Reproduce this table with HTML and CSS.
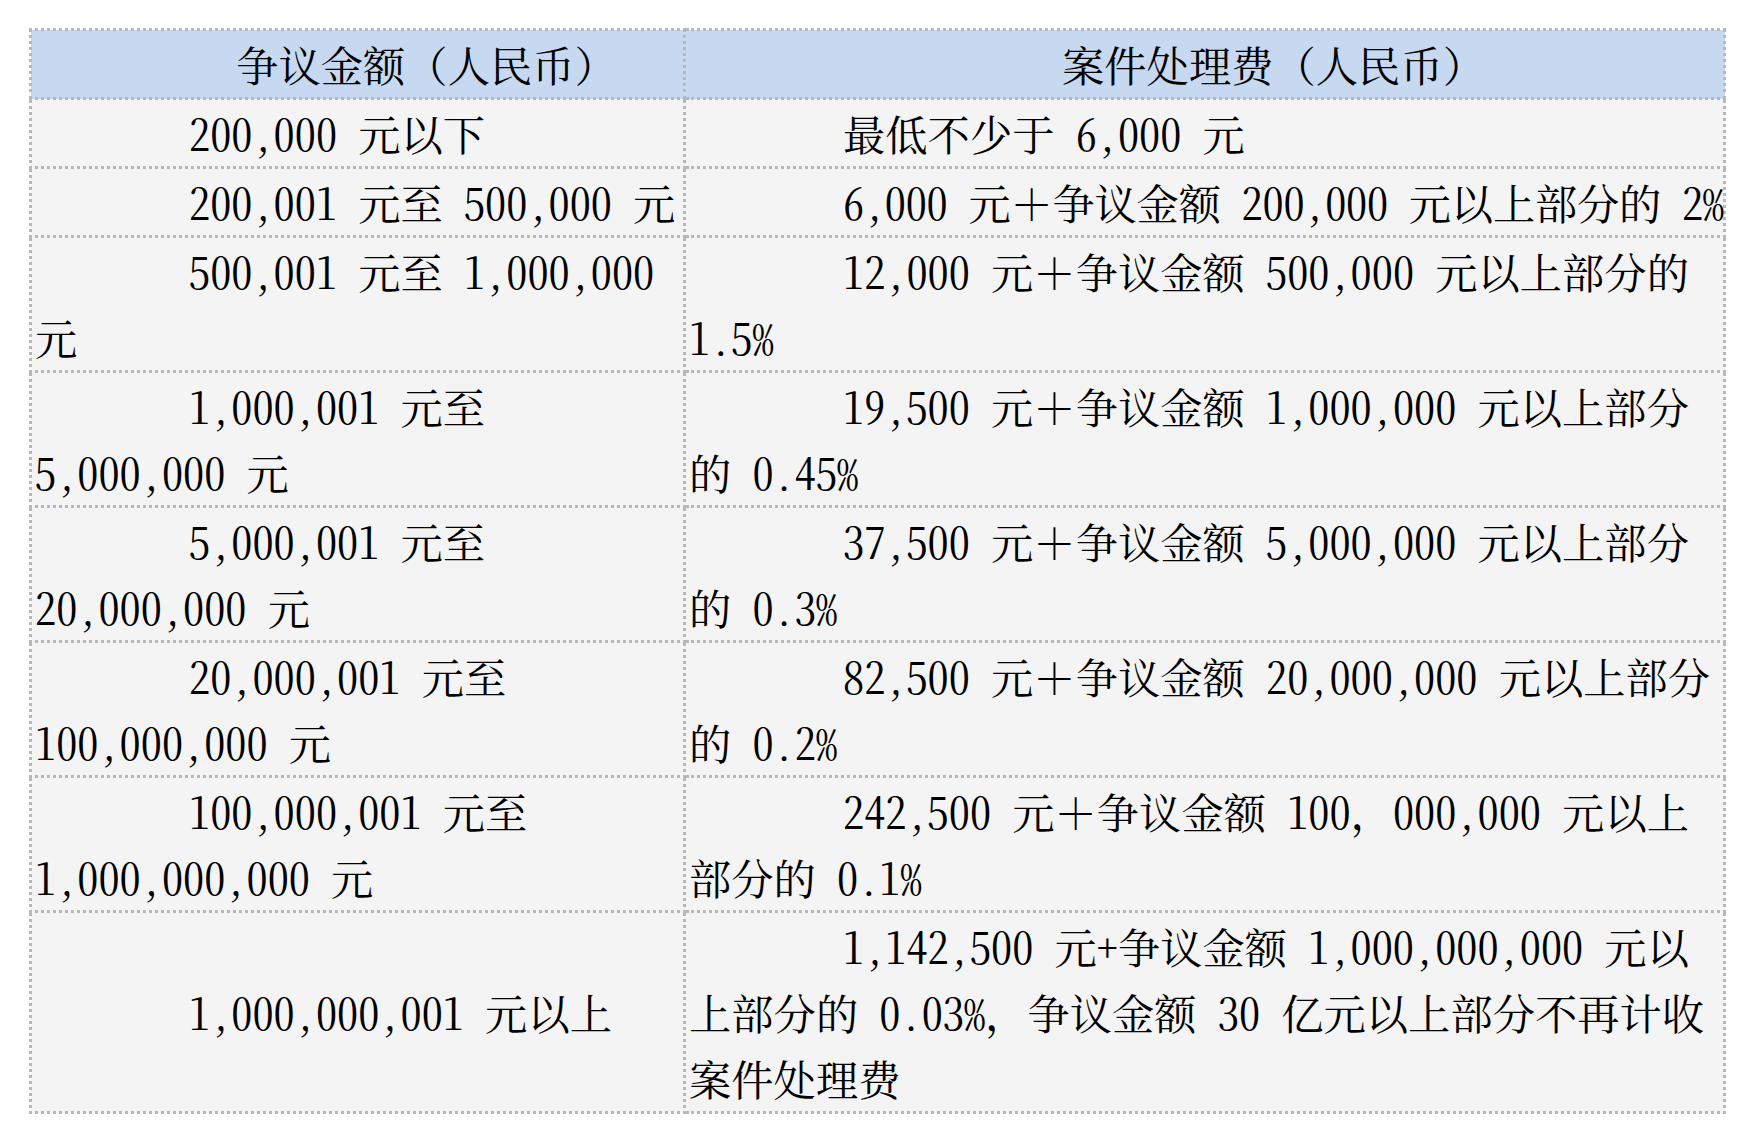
FILE: index.html
```html
<!DOCTYPE html>
<html lang="zh-CN">
<head>
<meta charset="utf-8">
<title>案件处理费表</title>
<link rel="stylesheet" href="styles.css">
</head>
<body>
<table class="fee-table">
  <colgroup>
    <col class="col-amount">
    <col class="col-fee">
  </colgroup>
  <thead>
    <tr>
      <th>争议金额<span class="fw">（</span>人民币<span class="fw">）</span></th>
      <th>案件处理费<span class="fw">（</span>人民币<span class="fw">）</span></th>
    </tr>
  </thead>
  <tbody>
    <tr>
      <td>200,000 元以下</td>
      <td>最低不少于 6,000 元</td>
    </tr>
    <tr>
      <td>200,001 元至 500,000 元</td>
      <td class="tight">6,000 元<span class="fw">＋</span>争议金额 200,000 元以上部分的 2%</td>
    </tr>
    <tr>
      <td>500,001 元至 1,000,000<br>元</td>
      <td>12,000 元<span class="fw">＋</span>争议金额 500,000 元以上部分的<br>1.5%</td>
    </tr>
    <tr>
      <td>1,000,001 元至<br>5,000,000 元</td>
      <td>19,500 元<span class="fw">＋</span>争议金额 1,000,000 元以上部分<br>的 0.45%</td>
    </tr>
    <tr>
      <td>5,000,001 元至<br>20,000,000 元</td>
      <td>37,500 元<span class="fw">＋</span>争议金额 5,000,000 元以上部分<br>的 0.3%</td>
    </tr>
    <tr>
      <td>20,000,001 元至<br>100,000,000 元</td>
      <td>82,500 元<span class="fw">＋</span>争议金额 20,000,000 元以上部分<br>的 0.2%</td>
    </tr>
    <tr>
      <td>100,000,001 元至<br>1,000,000,000 元</td>
      <td>242,500 元<span class="fw">＋</span>争议金额 100<span class="fw">，</span>000,000 元以上<br>部分的 0.1%</td>
    </tr>
    <tr>
      <td>1,000,000,001 元以上</td>
      <td>1,142,500 元+争议金额 1,000,000,000 元以<br>上部分的 0.03%<span class="fw">，</span>争议金额 30 亿元以上部分不再计收<br>案件处理费</td>
    </tr>
  </tbody>
</table>
</body>
</html>
```
FILE: styles.css
```css
html, body {
  margin: 0;
  padding: 0;
  background: #ffffff;
}

body {
  padding: 28px 0 0 29px;
}

.fee-table {
  border-collapse: collapse;
  table-layout: fixed;
  width: 1697px;
  font-family: "Noto Serif CJK SC", "Noto Sans CJK SC", serif;
  font-feature-settings: "hwid" 1;
  font-size: 42.3px;
  line-height: 66px;
  color: #000000;
}

.col-amount {
  width: 654px;
}

.fee-table th,
.fee-table td {
  border: 3px dotted #b8b8b8;
  padding: 0 0 0 3px;
  white-space: nowrap;
  vertical-align: middle;
  text-align: left;
  text-indent: 154px;
  font-weight: normal;
}

.fee-table th {
  background: #c6d9f1;
  text-align: center;
  text-indent: 135px;
}

.fee-table td {
  background: #f4f4f4;
}

.fee-table td.tight {
  letter-spacing: -0.25px;
}

.fw {
  font-feature-settings: normal;
}
```
